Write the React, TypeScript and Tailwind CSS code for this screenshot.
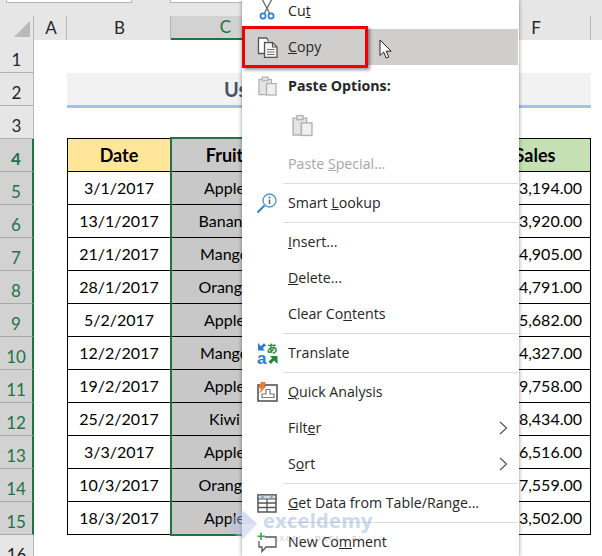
const gridFont = { fontFamily: '"Lato", "Liberation Sans", sans-serif' };

const rows = [
  ["3/1/2017", "Apple", "$13,194.00"],
  ["13/1/2017", "Banana", "$13,920.00"],
  ["21/1/2017", "Mango", "$14,905.00"],
  ["28/1/2017", "Orange", "$14,791.00"],
  ["5/2/2017", "Apple", "$15,682.00"],
  ["12/2/2017", "Mango", "$14,327.00"],
  ["19/2/2017", "Apple", "$19,758.00"],
  ["25/2/2017", "Kiwi", "$18,434.00"],
  ["3/3/2017", "Apple", "$16,516.00"],
  ["10/3/2017", "Orange", "$17,559.00"],
  ["18/3/2017", "Apple", "$13,502.00"],
];

function ColHead({ label, width, active }: { label: string; width: string; active?: boolean }) {
  return (
    <div
      className={`flex h-full items-center justify-center border-r border-[#b5b5b5] pl-[2px] text-[17px] ${width} ${
        active ? "border-b-2 border-b-[#217346] bg-[#d2d2d2] text-[#217346]" : "text-[#262626]"
      }`}
    >
      {label}
    </div>
  );
}

function RowNum({ n, active }: { n: number; active?: boolean }) {
  return (
    <div
      className={`flex h-[33px] w-[34px] shrink-0 items-center justify-center border-b pt-[8px] text-[17px] ${
        active
          ? "border-b-[#a8a8a8] border-r-2 border-r-[#217346] bg-[#d2d2d2] text-[#217346]"
          : "border-b-[#b1b1b1] border-r border-r-[#b5b5b5] bg-[#e6e6e6] text-[#262626]"
      }`}
    >
      {n}
    </div>
  );
}

function TableRow({ n, date, fruit, sales }: { n: number; date: string; fruit: string; sales: string }) {
  return (
    <div className="flex h-[33px] text-[16px] text-black">
      <RowNum n={n} active />
      <div className="w-[33px]" />
      <div className="flex w-[104px] items-center justify-center border-x border-b border-black">{date}</div>
      <div className="flex w-[108px] items-center justify-center border-b border-r border-black bg-[#c8c8c8]">{fruit}</div>
      <div className="w-[101px] border-b border-r border-black" />
      <div className="w-[100px] border-b border-r border-black" />
      <div className="flex w-[111px] items-center justify-end border-b border-r border-black pr-2">{sales}</div>
    </div>
  );
}

function Scissors() {
  return (
    <svg width="16" height="20" viewBox="0 0 16 20" fill="none" className="-mt-[2px]">
      <path d="M3.5 0 L10.5 13 M12.5 0 L5.5 13" stroke="#6d6d6d" strokeWidth="1.4" />
      <circle cx="4" cy="16" r="2.6" stroke="#2b7cd3" strokeWidth="1.6" />
      <circle cx="12" cy="16" r="2.6" stroke="#2b7cd3" strokeWidth="1.6" />
    </svg>
  );
}

function CopyIcon() {
  return (
    <svg width="21" height="21" viewBox="0 0 21 21" fill="none">
      <path d="M8 16.5 H1.5 V1 H9.5 L11.5 4" stroke="#555" strokeWidth="1.3" fill="#fff" />
      <path d="M7.5 5.5 H15.5 L20 10 V20.5 H7.5 Z" stroke="#555" strokeWidth="1.3" fill="#f4f4f4" />
      <path d="M10 12.5 H17.5 M10 15 H17.5 M10 17.5 H17.5" stroke="#777" strokeWidth="1" />
      <path d="M15.5 5.5 V10 H20" stroke="#555" strokeWidth="1.1" />
    </svg>
  );
}

function PasteIcon({ w, h }: { w: number; h: number }) {
  return (
    <svg width={w} height={h} viewBox="0 0 20 21" fill="none">
      <path d="M1 3.5 H14 V8 H9 V19.5 H1 Z" fill="#e4e4e4" stroke="#b0b0b0" strokeWidth="1.3" />
      <rect x="4.5" y="1" width="6" height="4" fill="#e4e4e4" stroke="#b0b0b0" strokeWidth="1.2" />
      <rect x="9" y="8" width="10" height="12" fill="#efefef" stroke="#b0b0b0" strokeWidth="1.3" />
    </svg>
  );
}

function LookupIcon() {
  return (
    <svg width="22" height="21" viewBox="0 0 22 21" fill="none">
      <circle cx="13.5" cy="7.5" r="6.5" stroke="#4a9bd8" strokeWidth="1.4" />
      <path d="M8.5 12.5 L1.5 19.5" stroke="#2b85c9" strokeWidth="2" />
      <circle cx="13.5" cy="4.5" r="1" fill="#666" />
      <path d="M13.5 6.5 V11" stroke="#666" strokeWidth="1.6" />
    </svg>
  );
}

function TranslateIcon() {
  return (
    <svg width="21" height="23" viewBox="0 0 21 23" fill="none" overflow="visible">
      <path d="M1 1 L1 8.5 L8 8.5 L5.8 6.2 L9 3.2 L7 1.2 L4 4.2 Z" fill="#2b7cd3" />
      <text x="0" y="22" fontSize="17" fontWeight="700" fill="#2b7cd3" fontFamily="Liberation Sans, sans-serif">a</text>
      <text x="9.5" y="10.5" fontSize="11" fontWeight="700" fill="#1e8a3c" fontFamily="Noto Sans CJK JP, sans-serif">あ</text>
      <path d="M20.5 22 L20.5 14 L13 14 L15.2 16.3 L11.5 19.5 L13.8 22 L17 18.6 Z" fill="#1e8a3c" />
    </svg>
  );
}

function QuickIcon() {
  return (
    <svg width="21" height="20" viewBox="0 0 21 20" fill="none">
      <rect x="1" y="3" width="19" height="16" fill="#fff" stroke="#555" strokeWidth="1.6" />
      <path d="M9 7.5 H13 V12 H17 V15.5 H5 V12 H9 Z" stroke="#777" strokeWidth="1.2" />
      <path d="M4 0 H9 L7 4 H9.5 L2 12 L4 6.5 H1 Z" fill="#ed7d31" />
    </svg>
  );
}

function TableIcon() {
  return (
    <svg width="20" height="19" viewBox="0 0 20 19" fill="none">
      <rect x="1" y="1" width="18" height="17" fill="#fff" stroke="#555" strokeWidth="1.5" />
      <rect x="1" y="1" width="18" height="4" fill="#d9d9d9" stroke="#555" strokeWidth="1" />
      <path d="M4 2.5 L7 2.5 L5.5 4.5 Z M13 2.5 L16 2.5 L14.5 4.5 Z" fill="#2b9be0" />
      <path d="M1 9 H19 M1 13.5 H19 M10 5 V18" stroke="#555" strokeWidth="1.3" />
    </svg>
  );
}

function CommentIcon() {
  return (
    <svg width="20" height="21" viewBox="0 0 20 21" fill="none">
      <path d="M8 5 H19 V15 H9 L5 19.5 V15 H2 V9" stroke="#555" strokeWidth="1.3" fill="#fff" />
      <path d="M4 0.5 V8 M0.5 4.2 H8" stroke="#39a845" strokeWidth="1.6" />
    </svg>
  );
}

function Item({
  icon,
  active,
  muted,
  arrow,
  children,
}: {
  icon?: React.ReactNode;
  active?: boolean;
  muted?: boolean;
  arrow?: boolean;
  children: React.ReactNode;
}) {
  return (
    <div className={`flex h-9 items-center ${active ? "mr-px bg-[#cfcecd]" : ""} ${muted ? "text-[#a6a6a6]" : "text-[#262626]"}`}>
      <div className="flex w-[46px] shrink-0 justify-center pl-1">{icon}</div>
      <div className="flex-1 pb-px">{children}</div>
      {arrow && (
        <svg width="9" height="14" viewBox="0 0 9 14" fill="none" className="mr-[11px]">
          <path d="M1 1 L7.5 7 L1 13" stroke="#555" strokeWidth="1.2" />
        </svg>
      )}
    </div>
  );
}

function Sep() {
  return (
    <div className="flex h-[3px] items-center pl-[41px] pr-px">
      <div className="h-[1.5px] w-full bg-[#dcdcdc]" />
    </div>
  );
}

function ContextMenu() {
  return (
    <div
      className="absolute left-[242px] top-0 h-[556px] w-[277px] overflow-hidden bg-white text-[14.2px] shadow-[0_0_4px_rgba(0,0,0,0.45)]"
      style={{ fontFamily: '"Open Sans", "Noto Sans", sans-serif' }}
    >
      <div className="-mt-[7px]">
        <Item icon={<Scissors />}>Cu<u>t</u></Item>
        <Item icon={<CopyIcon />} active><u>C</u>opy</Item>
        <div className="h-[3px]" />
        <Item icon={<PasteIcon w={19} h={20} />}><b className="font-bold">Paste Options:</b></Item>
        <div className="flex h-[42px] items-center pl-[50px]">
          <PasteIcon w={21} h={23} />
        </div>
        <Item muted>Paste <u>S</u>pecial...</Item>
        <Sep />
        <Item icon={<LookupIcon />}>Smart <u>L</u>ookup</Item>
        <Sep />
        <Item><u>I</u>nsert...</Item>
        <Item><u>D</u>elete...</Item>
        <Item>Clear Co<u>n</u>tents</Item>
        <Sep />
        <Item icon={<TranslateIcon />}>Translate</Item>
        <Sep />
        <Item icon={<QuickIcon />}><u>Q</u>uick Analysis</Item>
        <Item arrow>Filt<u>e</u>r</Item>
        <Item arrow>S<u>o</u>rt</Item>
        <Sep />
        <Item icon={<TableIcon />}><u>G</u>et Data from Table/Range...</Item>
        <Sep />
        <Item icon={<CommentIcon />}>New Co<u>m</u>ment</Item>
      </div>
      <div className="absolute left-0 top-[26px] h-[42px] w-[126px] border-[3px] border-[#f00000] shadow-[2px_2px_3px_rgba(0,0,0,0.4)]" />
      <svg width="14" height="21" viewBox="0 0 14 21" className="absolute left-[137px] top-[39px]">
        <path d="M1 1 V16.5 L4.6 13 L7.2 19 L9.8 18 L7.2 12.2 H12.2 Z" fill="#fff" stroke="#222" strokeWidth="1" />
      </svg>
    </div>
  );
}

function Watermark() {
  return (
    <div className="absolute left-[230px] top-[508px] flex items-start gap-[5px] opacity-45">
      <svg width="28" height="30" viewBox="0 0 28 30" className="mt-[2px]">
        <path d="M13 1 L27 14 L13 29 L1 22 V8 Z" fill="#b4c3e8" />
        <path d="M13 1 L27 14 L13 14 Z" fill="#9db1e0" />
      </svg>
      <div className="flex flex-col items-center" style={{ fontFamily: '"Open Sans", sans-serif' }}>
        <div className="text-[20px] font-bold leading-[25px] tracking-[0.3px] text-[#8ea9db]">exceldemy</div>
        <div className="text-[8px] leading-[10px] tracking-[1.5px] text-[#7f7f7f]">EXCEL · DATA · BI</div>
      </div>
    </div>
  );
}

export default function App() {
  return (
    <div className="relative h-[556px] w-[602px] overflow-hidden bg-white" style={gridFont}>
      {/* formula bar */}
      <div className="relative h-4 bg-[#e6e6e6]">
        <div className="absolute left-[6px] top-0 h-[3px] w-[126px] border-x border-b border-[#b5b5b5] bg-white" />
        <div className="absolute left-[170px] top-0 h-[3px] w-[90px] border-x border-b border-[#b5b5b5] bg-white" />
      </div>

      {/* column headers */}
      <div className="flex h-6 bg-[#e6e6e6]">
        <div className="flex w-[34px] items-end justify-end border-r border-[#b5b5b5] pb-[3px] pr-[3px]">
          <svg width="16" height="16" viewBox="0 0 16 16">
            <path d="M16 0 V16 H0 Z" fill="#b9b9b9" />
          </svg>
        </div>
        <ColHead label="A" width="w-[33px]" />
        <ColHead label="B" width="w-[104px]" />
        <ColHead label="C" width="w-[108px]" active />
        <ColHead label="D" width="w-[101px]" />
        <ColHead label="E" width="w-[100px]" />
        <ColHead label="F" width="w-[111px]" />
      </div>

      <div className="flex h-[33px]">
        <RowNum n={1} />
      </div>
      <div className="flex h-[33px]">
        <RowNum n={2} />
        <div className="ml-[33px] flex h-[35px] w-[524px] items-center border-b-[3px] border-[#a9bfe4] bg-[#f2f2f2] pl-[157px] text-[20px] font-bold text-[#44546a]">
          Using Copy
        </div>
      </div>
      <div className="flex h-[33px]">
        <RowNum n={3} />
        <div className="ml-[33px] w-[524px] border-b border-black" />
      </div>

      {/* table header */}
      <div className="flex h-[33px] text-[18px] font-bold text-black">
        <RowNum n={4} active />
        <div className="w-[33px]" />
        <div className="flex w-[104px] items-center justify-center border-x border-b border-black bg-[#ffe699]">Date</div>
        <div className="flex w-[108px] items-center justify-center border-b border-r border-black bg-[#cbcaca]">Fruit</div>
        <div className="w-[101px] border-b border-r border-black" />
        <div className="w-[100px] border-b border-r border-black" />
        <div className="flex w-[111px] items-center justify-center border-b border-r border-black bg-[#c6e0b4]">Sales</div>
      </div>

      {rows.map(([date, fruit, sales], i) => (
        <TableRow key={i} n={i + 5} date={date} fruit={fruit} sales={sales} />
      ))}

      <div className="flex">
        <RowNum n={16} />
      </div>

      {/* selection outline on column C */}
      <div className="absolute left-[170px] top-[137px] h-[399px] w-[110px] border-2 border-[#217346]" />

      <ContextMenu />
      <Watermark />
    </div>
  );
}
